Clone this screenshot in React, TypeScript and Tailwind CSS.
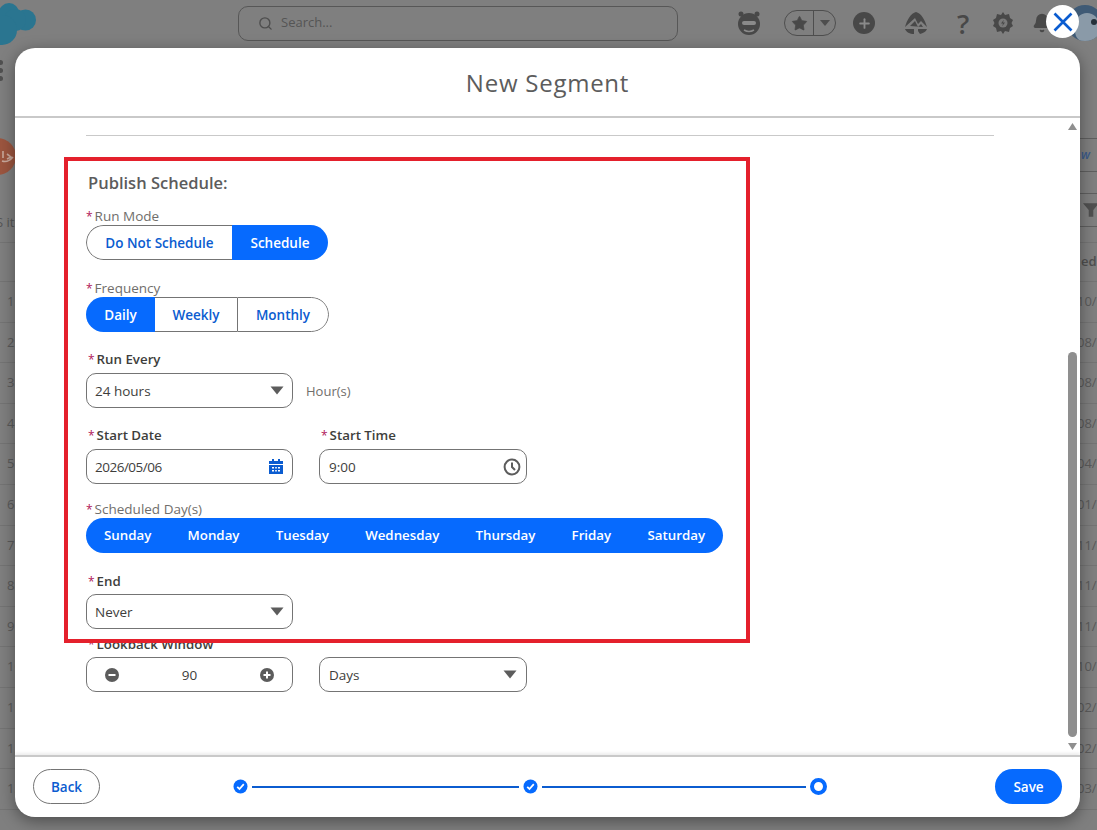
import { Search, Star, Plus, Bell } from "lucide-react";

const font = "font-['Open_Sans',sans-serif]";
const rows = [
  ["1", "10/"], ["2", "08/"], ["3", "08/"], ["4", "08/"], ["5", "04/"], ["6", "01/"], ["7", "11/"],
  ["8", "11/"], ["9", "11/"], ["10", "10/"], ["11", "02/"], ["12", "02/"], ["13", "03/"],
];

function Caret() {
  return (
    <svg width="14" height="9" viewBox="0 0 14 9" className="shrink-0">
      <path d="M0.5 0.5 H13.5 L7 8.5 Z" fill="#5c5c5c" />
    </svg>
  );
}

function Label({ text, bold }: { text: string; bold?: boolean }) {
  return bold ? (
    <div className="pl-[2px] text-[13.3px] leading-[16px] font-semibold text-[#3e3e3c]">
      <span className="text-[12px] leading-[0] font-normal text-[#b01858] mr-[2px]">*</span>
      {text}
    </div>
  ) : (
    <div className="text-[13.5px] leading-[16px] text-[#706e6b]">
      <span className="text-[12px] leading-[0] text-[#b01858] mr-[2px]">*</span>
      {text}
    </div>
  );
}

function Field({ children, w = "w-[207px]", pad = "pl-[8px] pr-[8px]" }: { children: React.ReactNode; w?: string; pad?: string }) {
  return (
    <div className={`${w} ${pad} h-[35px] flex items-center justify-between rounded-[10px] border border-[#747474] bg-white text-[13.5px] text-[#3e3e3c]`}>
      {children}
    </div>
  );
}

function Seg({ items }: { items: { t: string; on?: boolean; w: string; cls?: string }[] }) {
  return (
    <div className="flex h-[35px] w-fit overflow-hidden rounded-full text-[13.5px] font-semibold">
      {items.map((it) => (
        <div
          key={it.t}
          className={`flex items-center justify-center pt-px ${it.w} ${it.on ? "bg-[#066afe] text-white" : "border-y border-[#747474] bg-white text-[#0b5cd0]"} ${it.cls ?? ""}`}
        >
          {it.t}
        </div>
      ))}
    </div>
  );
}

function Check() {
  return (
    <svg width="15" height="15" viewBox="0 0 15 15">
      <circle cx="7.5" cy="7.5" r="7" fill="#066afe" />
      <path d="M4.2 7.8 L6.5 10 L10.8 5.2" fill="none" stroke="#fff" strokeWidth="1.8" />
    </svg>
  );
}

export default function App() {
  return (
    <div className={`${font} relative h-[830px] w-[1097px] overflow-hidden bg-[#7f7f7f]`}>
      {/* page behind the modal */}
      <div className="flex h-[48px] items-center pb-[2px]">
        <svg width="40" height="46" viewBox="0 0 40 46" className="shrink-0">
          <g fill="#2a7590">
            <circle cx="9" cy="13" r="10" />
            <circle cx="25.5" cy="20" r="10.5" />
            <circle cx="15" cy="20" r="11" />
            <circle cx="2" cy="30" r="15" />
          </g>
        </svg>
        <div className="ml-[198px] flex h-[35px] w-[440px] items-center gap-[8px] rounded-[10px] border border-[#575757] pl-[19px] text-[13px] text-[#555]">
          <Search size={15} strokeWidth={2.2} color="#4e4e4e" />
          Search...
        </div>
        <div className="ml-[58px] flex items-center text-[#484848]">
          <svg width="26" height="26" viewBox="0 0 26 26" className="shrink-0">
            <circle cx="13" cy="14" r="11" fill="#484848" />
            <circle cx="5" cy="4" r="2.5" fill="#484848" />
            <circle cx="21" cy="4" r="2.5" fill="#484848" />
            <rect x="6" y="11" width="14" height="4" rx="2" fill="#8a8a8a" />
            <path d="M8 20 Q13 23 18 20" stroke="#8a8a8a" strokeWidth="1.5" fill="none" />
          </svg>
          <div className="ml-[22px] flex h-[26px] w-[52px] items-center rounded-full border border-[#4e4e4e]">
            <div className="flex w-[28px] justify-center">
              <Star size={17} fill="#484848" strokeWidth={1} />
            </div>
            <div className="flex h-full flex-1 items-center justify-center border-l border-[#4e4e4e]">
              <svg width="10" height="6" viewBox="0 0 10 6"><path d="M0 0 H10 L5 6 Z" fill="#4e4e4e" /></svg>
            </div>
          </div>
          <div className="ml-[17px] flex h-[22px] w-[22px] items-center justify-center rounded-full bg-[#484848]">
            <Plus size={15} color="#8a8a8a" strokeWidth={3} />
          </div>
          <svg width="24" height="22" viewBox="0 0 24 22" className="ml-[29px] shrink-0">
            <path d="M12 0 C17 1 21 8 23 15 L17 9 L14 12 L11 6 L1 15 C3 8 7 1 12 0 Z" fill="#484848" />
            <path d="M6 14 L11 9 L14 15 L17 12 L19 15 Z" fill="#484848" />
            <path d="M1 17 L10 17 L10 22 C6 22 2 20 1 17 Z M23 17 L14 17 L14 19 L16 22 C19 21 22 20 23 17 Z" fill="#484848" />
          </svg>
          <span className="ml-[29px] text-[27px] font-semibold leading-none text-[#484848]">?</span>
          <svg width="22" height="24" viewBox="0 0 22 24" className="ml-[23px] shrink-0">
            <path d="M11 1 L13 4 L17 3 L18 7 L21 9 L19.5 12 L21 15 L18 17 L17 21 L13 20 L11 23 L9 20 L5 21 L4 17 L1 15 L2.5 12 L1 9 L4 7 L5 3 L9 4 Z" fill="#484848" />
            <circle cx="11" cy="12" r="4.5" fill="#7a7a7a" />
            <path d="M11.8 8.8 L9 12.6 H11 L10.2 15.2 L13 11.4 H11 Z" fill="#484848" />
          </svg>
          <Bell size={20} className="ml-[18px]" fill="#484848" color="#484848" />
          <div className="relative ml-[15px] mr-[-40px] h-[36px] w-[36px] shrink-0 overflow-hidden rounded-full bg-[#3f5a75]">
            <div className="absolute left-[8px] top-[8px] h-[30px] w-[24px] rounded-full bg-[#8a9aa8]" />
            <div className="absolute left-[24px] top-[14px] h-[6px] w-[6px] rounded-full bg-[#26303a]" />
          </div>
        </div>
      </div>
      <div className="flex h-[44px] items-center">
        <div className="ml-[-1px] flex flex-col gap-[3px]">
          {[0, 1, 2].map((i) => (
            <div key={i} className="h-[5px] w-[4px] rounded-r-full bg-[#505050]" />
          ))}
        </div>
      </div>
      <div className="flex h-[101px] items-start justify-between pt-[46px]">
        <div className="ml-[-21px] flex h-[37px] w-[37px] items-center justify-end rounded-full bg-[#9c553f] pr-[2px]">
          <svg width="14" height="16" viewBox="0 0 14 16"><path d="M3 2 L3 9 M2 12 Q8 14 13 8 M7 5 L11 8 L7 10" fill="none" stroke="#c9a99c" strokeWidth="1.6" /></svg>
        </div>
        <div className="mr-[-22px] flex h-[34px] w-[60px] items-center rounded-l-full border border-[#5f5f5f] pl-[21px] text-[12px] font-semibold italic text-[#3b5b8c]">w</div>
      </div>
      <div className="flex h-[50px] items-start justify-between border-b border-[#747474] text-[13px] text-[#555]">
        <span className="ml-[-4px] mt-[20px]">S it</span>
        <div className="mr-[-22px] flex h-[34px] w-[60px] items-center rounded-l-full border border-[#5f5f5f] pl-[23px]">
          <svg width="16" height="16" viewBox="0 0 14 14"><path d="M0 1 H14 L9 7 V13 H5 V7 Z" fill="#505050" /></svg>
        </div>
      </div>
      <div className="flex h-[39px] items-center justify-end border-b border-[#747474] text-[13px] font-semibold text-[#4f4f4f]">
        <span className="w-[16px] overflow-hidden whitespace-nowrap">ed D</span>
      </div>
      {rows.map(([n, d]) => (
        <div key={n} className="flex h-[40.6px] items-center justify-between border-b border-[#747474] text-[13px] text-[#5a5a5a]">
          <span className="ml-[7px]">{n}</span>
          <span className="w-[20px] whitespace-nowrap">{d}</span>
        </div>
      ))}

      {/* modal */}
      <div className="absolute left-[15px] top-[48px] flex h-[769px] w-[1065px] flex-col overflow-hidden rounded-[20px] bg-white shadow-[0_4px_16px_rgba(0,0,0,0.4)]">
        <div className="flex h-[70px] shrink-0 items-center justify-center border-b-2 border-[#c9c9c9] pt-px text-[24px] tracking-[0.75px] text-[#5c5c5c]">
          New Segment
        </div>
        <div className="relative flex min-h-0 flex-1 overflow-hidden">
          <div className="w-[1053px] shrink-0 pl-[71px] pt-[17px]">
            <div className="h-px w-[908px] bg-[#c9c9c9]" />
            <div className="relative z-10 ml-[-22px] mt-[21px] h-[486px] w-[686px] border-4 border-[#e4202c] bg-white pl-[18px] pt-[11px]">
              <div className="pl-[2px] text-[16.5px] font-semibold leading-[22px] text-[#5c5c5c]">Publish Schedule:</div>
              <div className="mt-[14px]"><Label text="Run Mode" /></div>
              <div className="mt-px">
                <Seg items={[{ t: "Do Not Schedule", w: "w-[146px]", cls: "border-l rounded-l-full" }, { t: "Schedule", on: true, w: "w-[96px]" }]} />
              </div>
              <div className="mt-[20px]"><Label text="Frequency" /></div>
              <div className="mt-px">
                <Seg items={[{ t: "Daily", on: true, w: "w-[69px]" }, { t: "Weekly", w: "w-[82px]" }, { t: "Monthly", w: "w-[92px]", cls: "border-l border-r rounded-r-full" }]} />
              </div>
              <div className="mt-[19px]"><Label text="Run Every" bold /></div>
              <div className="mt-[6px] flex items-center gap-[13px]">
                <Field><span className="pt-px">24 hours</span><Caret /></Field>
                <span className="pt-[3px] text-[13px] text-[#706e6b]">Hour(s)</span>
              </div>
              <div className="mt-[19px] flex gap-[26px]">
                <div>
                  <Label text="Start Date" bold />
                  <div className="mt-[6px]">
                    <Field>
                      <span className="pt-px tracking-[-0.5px]">2026/05/06</span>
                      <svg width="14" height="15" viewBox="0 0 14 15" className="mr-px">
                        <path d="M3 0 H5 V2 H9 V0 H11 V2 H14 V5 H0 V2 H3 Z M0 6 H14 V15 H0 Z" fill="#0b5cd0" />
                        <path d="M3 8 H5 V9.5 H3 Z M6.2 8 H7.8 V9.5 H6.2 Z M9 8 H11 V9.5 H9 Z M3 11 H5 V12.5 H3 Z M6.2 11 H7.8 V12.5 H6.2 Z M9 11 H11 V12.5 H9 Z" fill="#fff" />
                      </svg>
                    </Field>
                  </div>
                </div>
                <div>
                  <Label text="Start Time" bold />
                  <div className="mt-[6px]">
                    <Field w="w-[208px]" pad="pl-[9px] pr-[5px]">
                      <span className="pt-px">9:00</span>
                      <svg width="18" height="18" viewBox="0 0 18 18">
                        <circle cx="9" cy="9" r="7.4" fill="none" stroke="#5c5c5c" strokeWidth="2" />
                        <path d="M9 4.5 V9 L12 12" fill="none" stroke="#5c5c5c" strokeWidth="2" />
                      </svg>
                    </Field>
                  </div>
                </div>
              </div>
              <div className="mt-[17px]"><Label text="Scheduled Day(s)" /></div>
              <div className="mt-px flex h-[35px] w-[637px] items-center justify-between rounded-full bg-[#066afe] px-[18px] pt-px text-[13.3px] font-semibold text-white">
                {["Sunday", "Monday", "Tuesday", "Wednesday", "Thursday", "Friday", "Saturday"].map((d) => (
                  <span key={d}>{d}</span>
                ))}
              </div>
              <div className="mt-[20px]"><Label text="End" bold /></div>
              <div className="mt-[5px]">
                <Field><span className="pt-px">Never</span><Caret /></Field>
              </div>
            </div>
            <div className="mt-[-7px]"><Label text="Lookback Window" bold /></div>
            <div className="mt-[5px] flex gap-[26px]">
              <Field>
                <svg width="14" height="14" viewBox="0 0 14 14" className="ml-[10px]">
                  <circle cx="7" cy="7" r="7" fill="#5c5c5c" />
                  <rect x="3.5" y="6" width="7" height="2" fill="#fff" />
                </svg>
                <span className="pt-px">90</span>
                <svg width="14" height="14" viewBox="0 0 14 14" className="mr-[10px]">
                  <circle cx="7" cy="7" r="7" fill="#5c5c5c" />
                  <path d="M3.5 6 H6 V3.5 H8 V6 H10.5 V8 H8 V10.5 H6 V8 H3.5 Z" fill="#fff" />
                </svg>
              </Field>
              <Field w="w-[208px]" pad="pl-[9px] pr-[9px]"><span className="pt-px">Days</span><Caret /></Field>
            </div>
          </div>
          <div className="flex w-[9px] flex-col items-center pt-[5px]">
            <svg width="9" height="7" viewBox="0 0 9 7"><path d="M4.5 0 L9 7 H0 Z" fill="#8f8f8f" /></svg>
            <div className="mt-[222px] h-[385px] w-[9px] shrink-0 rounded-full bg-[#8f8f8f]" />
            <svg width="9" height="7" viewBox="0 0 9 7" className="mt-[6px] shrink-0"><path d="M0 0 H9 L4.5 7 Z" fill="#8f8f8f" /></svg>
          </div>
        </div>
        <div className="flex h-[62px] shrink-0 items-center border-t-2 border-[#c9c9c9] pb-px pl-[18px] pr-[18px] shadow-[0_-2px_3px_rgba(0,0,0,0.08)]">
          <div className="flex h-[35px] w-[67px] items-center justify-center rounded-full border border-[#747474] pt-[2px] text-[13.5px] font-semibold text-[#0b5cd0]">Back</div>
          <div className="ml-[133px] flex items-center">
            <Check />
            <div className="mx-[4px] h-[2px] w-[267px] bg-[#0b5cd0]" />
            <Check />
            <div className="mx-[4px] h-[2px] w-[264px] bg-[#0b5cd0]" />
            <div className="h-[17px] w-[17px] rounded-full border-[4px] border-[#066afe] bg-white" />
          </div>
          <div className="ml-auto flex h-[35px] w-[67px] items-center justify-center rounded-full bg-[#066afe] pt-[2px] text-[13.5px] font-semibold text-white">Save</div>
        </div>
      </div>

      {/* close button */}
      <div className="absolute left-[1046px] top-[5px] flex h-[33px] w-[33px] items-center justify-center rounded-full bg-white">
        <svg width="20" height="20" viewBox="0 0 20 20">
          <path d="M1.5 1.5 L18.5 18.5 M18.5 1.5 L1.5 18.5" stroke="#0b5cd0" strokeWidth="2.6" />
        </svg>
      </div>
    </div>
  );
}
